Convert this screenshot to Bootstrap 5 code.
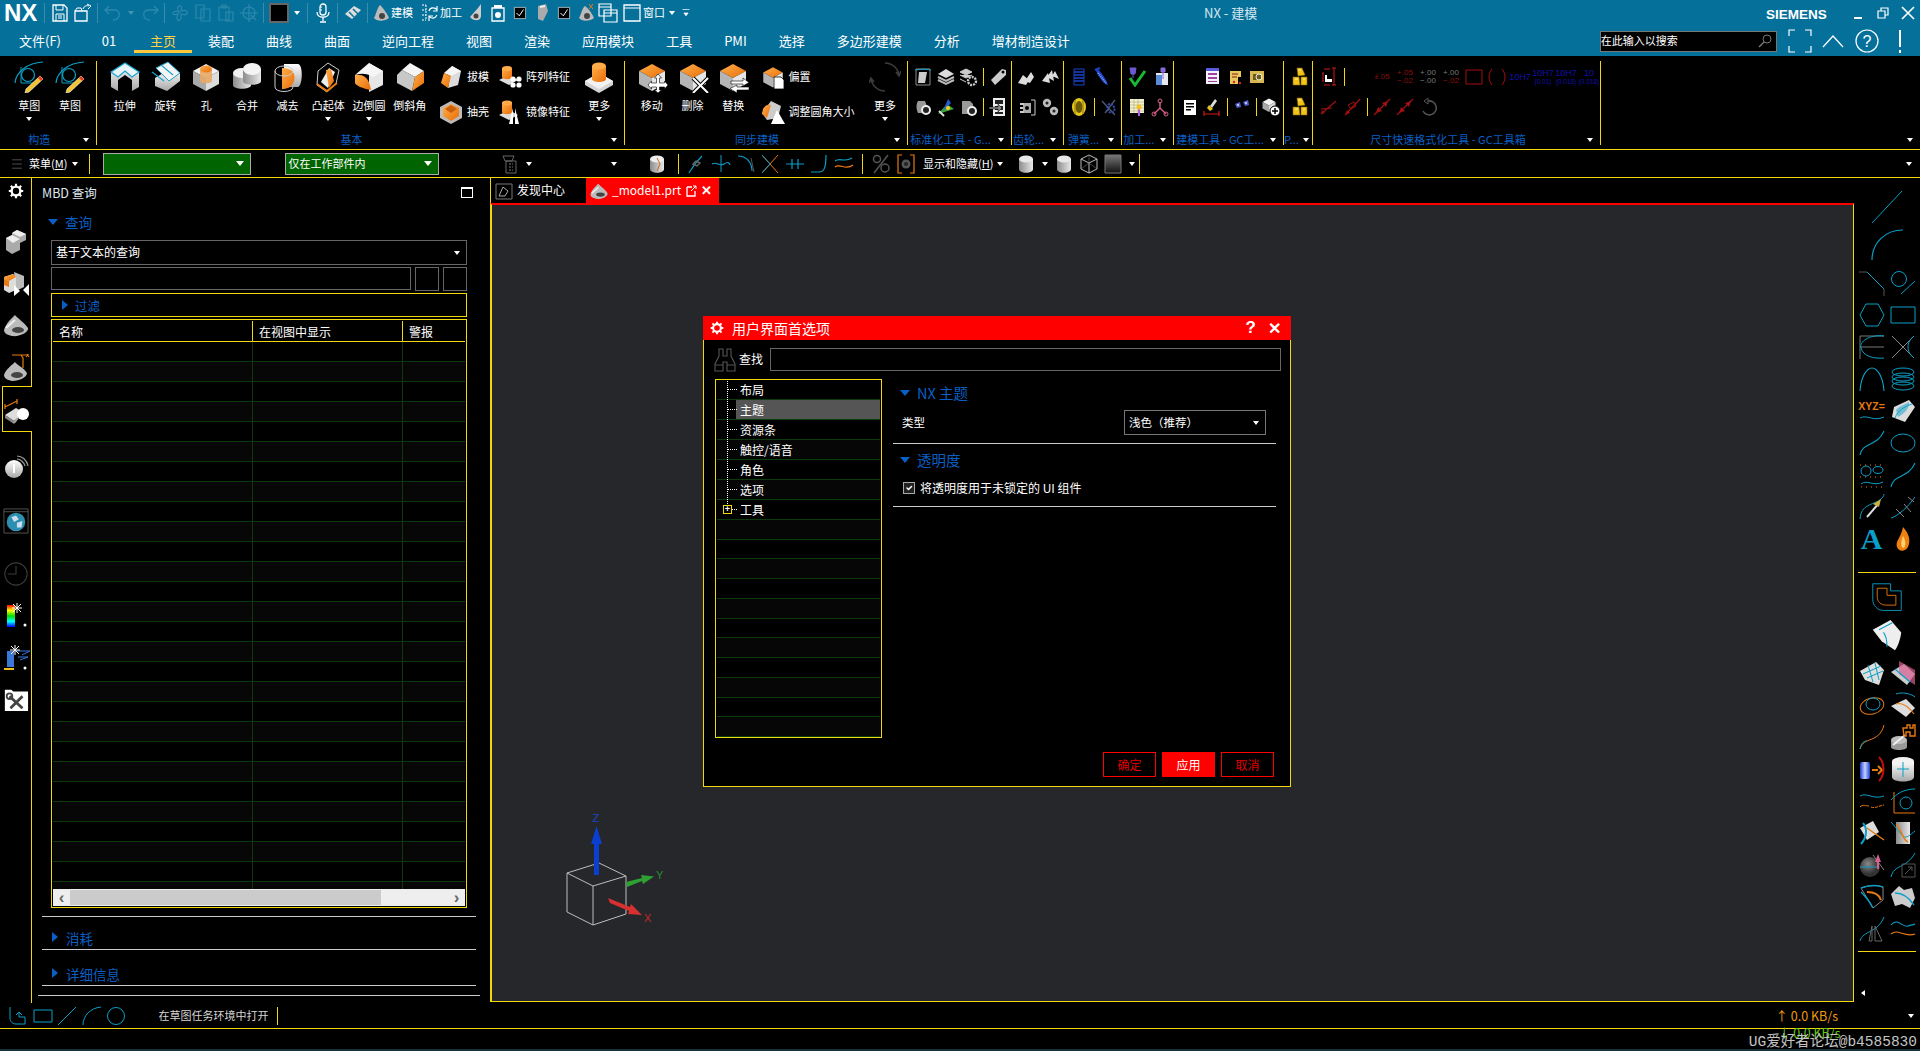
<!DOCTYPE html>
<html lang="zh-CN">
<head>
<meta charset="UTF-8">
<title>NX - 建模</title>
<link rel="stylesheet" href="https://cdn.jsdelivr.net/npm/bootstrap@5.3.3/dist/css/bootstrap.min.css">
<style>
  :root { --nx-y: #f2d80c; --nx-blue: #0a5fc4; --nx-head: #05719b; --nx-line: #0b3a0b; }
  body { background: #000; color: #fff; font-family: "Noto Sans CJK SC", "Liberation Sans", sans-serif; font-size: 12px; height: 1051px; width: 1920px; overflow: hidden; line-height: 1.2; }
  svg { display: block; flex: none; }
  .i14 { width: 14px; height: 14px; } .i16 { width: 16px; height: 16px; } .i20 { width: 20px; height: 20px; } .i24 { width: 24px; height: 24px; }
  .i26 { width: 26px; height: 26px; } .i28 { width: 28px; height: 28px; } .i32 { width: 32px; height: 32px; } .i36 { width: 36px; height: 36px; }
  .tri { display: inline-block; width: 0; height: 0; border-left: 3.5px solid transparent; border-right: 3.5px solid transparent; border-top: 4px solid #fff; flex: none; }
  .tri-bd { display: inline-block; border-left: 5.5px solid transparent; border-right: 5.5px solid transparent; border-top: 6px solid var(--nx-blue); flex: none; }
  .tri-br { display: inline-block; border-top: 5.5px solid transparent; border-bottom: 5.5px solid transparent; border-left: 6px solid var(--nx-blue); flex: none; }

  /* head */
  .nx-head { background: var(--nx-head); height: 56px; flex: none; }
  .qa-row { height: 26px; }
  .nx-logo { width: 41px; padding-left: 4px; font: 700 24px "Liberation Sans", sans-serif; }
  .qa { width: 23px; display: flex; justify-content: center; flex: none; }
  .qa-n { width: 22px; } .qa-c { width: 20px; } .qa-a { width: 14px; display: flex; justify-content: center; flex: none; } .qa-w { width: 21px; }
  .qa-sep { width: 1px; height: 20px; margin: 0 3px; background: #3b8bab; flex: none; }
  .qa-t { font-size: 11px; white-space: nowrap; }
  .qa-gap3 { margin-right: 3px; } .qa-gap6 { margin-right: 6px; } .qa-gap2 { margin-left: 2px; }
  .nx-title { margin-left: 511px; font-size: 13px; color: #d5e6ee; white-space: nowrap; }
  .nx-siemens { margin-left: auto; margin-top: 2px; font: 700 13.5px "Liberation Sans", sans-serif; width: 88px; padding-left: 9px; }
  .win-btn { width: 25px; display: flex; justify-content: center; }
  .tab-row { height: 30px; }
  .tab-row .nav-link { color: #fff; font-size: 13px; padding: 0 16px; height: 30px; line-height: 29px; white-space: nowrap; border-bottom: 2px solid transparent; }
  .tab-row .nav-link.active { color: #ffd24a; border-bottom: 3px solid #ffc83a; height: 27px; line-height: 29px; }
  .tab-row .tb-file { width: 80px; padding: 0; text-align: center; }
  .tab-row .tb-01 { width: 54px; padding: 0 0 0 4px; text-align: center; }
  .nx-search { width: 177px; height: 21px; margin-left: 514px; background: #000; border: 1px solid #777; font-size: 11px; }
  .head-ic { width: 33.5px; display: flex; justify-content: center; }
  .head-ic:first-of-type { margin-left: 6px; }

  /* ribbon */
  .nx-ribbon { height: 93px; flex: none; background: #000; }
  .rg { height: 84px; margin-top: 5px; border-right: 1px solid var(--nx-y); display: flex; flex-direction: column; flex: none; }
  .rg-body { display: flex; flex: 1 1 auto; min-height: 0; }
  .rg-foot { display: flex; align-items: center; height: 14px; margin-bottom: -2px; color: var(--nx-blue); font-size: 11px; white-space: nowrap; padding-right: 7px; }
  .rg-foot > span:first-child { flex: 1 1 auto; text-align: center; padding-right: 4px; }
  .w-gz { width: 96.5px; } .w-jb { width: 528px; } .w-tb { width: 283px; } .w-bz { width: 104px; } .w-cl { width: 52px; }
  .w-th { width: 58px; } .w-jg { width: 52.5px; } .w-jm { width: 110px; } .w-p { width: 29px; } .w-cc { width: 288px; } .w-end { flex: 1 1 auto; border-right: 0; }
  .pad-gz { padding-left: 9px; } .pad-jb { padding-left: 8px; }  .pad-tb { padding-left: 7px; }
  .rb { width: 40.7px; display: flex; flex-direction: column; align-items: center; flex: none; }
  .rb .lbl { margin-top: 5px; font-size: 11px; line-height: 14px; white-space: nowrap; }
  .rb .tri { margin-top: 5px; }
  .rc { display: flex; flex-direction: column; margin-top: -1.5px; flex: none; }
  .rs { display: flex; align-items: center; height: 35px; font-size: 11px; white-space: nowrap; }
  .rs svg { margin-right: 4px; }
  .rc-a { width: 59px; margin-left: 9px; } .rc-b { width: 81px; }  .rc-c { width: 104px; margin-left: 7px; }
  .mg { display: flex; flex-direction: column; padding: 1px 0 0 4.5px; }
  .mr { display: flex; align-items: center; height: 30px; }
  .mi { width: 22.5px; display: flex; justify-content: center; align-items: center; flex: none; }
  .mw .mi { width: 23px; }
  .msep { width: 1px; height: 18px; background: var(--nx-y); margin: 0 3px; flex: none; }
  .mi.tol { display: block; font: 8px/8px "Liberation Sans", sans-serif; color: #8a1010; text-align: center; white-space: nowrap; }
  .mi.tol-g { color: #777; } .mi.tol-b { color: #1010a8; font-size: 9px; line-height: 9px; }
  .tol-g2 { color: #777; } .tol-s { display: block; font-size: 6.5px; line-height: 7px; }

  /* toolbar */
  .nx-tools { height: 29px; flex: none; border-top: 1px solid var(--nx-y); border-bottom: 1px solid var(--nx-y); display: flex; align-items: center; font-size: 11px; white-space: nowrap; }
  .tl-menu { width: 88.5px; padding-left: 10px; gap: 5px; }
  .tl-sep { width: 1px; height: 20px; background: var(--nx-y); flex: none; }
  .tl-sel { height: 22px; background: #006400; border: 1px solid #aaa; display: flex; align-items: center; padding: 0 6px 0 3px; color: #fff; flex: none; }
  .tl-sel .tri { margin-left: auto; border-left-width: 4px; border-right-width: 4px; border-top-width: 5px; }
  .tl-s1 { width: 148px; margin-left: 13px; } .tl-s2 { width: 154px; margin-left: 34px; }
  .tl-i { width: 24.5px; display: flex; justify-content: center; flex: none; }
  .tl-a { width: 14px; display: flex; justify-content: center; flex: none; }
  .tl-gap1 { margin-left: 59px; } .tl-gap2 { margin-left: 71px; } .tl-gap3 { margin-left: 24px; } .tl-gap4 { margin-left: 6px; } .tl-gap5 { margin-left: 6px; } .tl-gap6 { margin-left: 8px; }
  .tl-show { margin-left: 5px; }

  /* main */
  .nx-main { height: 825px; flex: none; display: flex; }
  .nx-strip { width: 32px; border-right: 1px solid var(--nx-y); flex: none; display: flex; flex-direction: column; align-items: center; }
  .st { height: 28px; display: flex; justify-content: center; align-items: center; width: 100%; flex: none; }
  .st-first { margin-top: -1px; } .st-g12 { margin-top: 12px; } .st-g14 { margin-top: 14px; } .st-g15 { margin-top: 15px; }
  .st-g21 { margin-top: 21px; } .st-g25 { margin-top: 25px; } .st-g26 { margin-top: 26px; }
  .st-on { width: 30px; height: 46px; margin: 4px -1px 0 2px; align-self: flex-start; position: relative; background: #000; border: 1px solid var(--nx-y); border-right: 0; padding: 4px 2px 0 0; }

  .nx-panel { width: 458px; flex: none; display: flex; flex-direction: column; }
  .pn-title { height: 29px; padding: 0 17px 0 10px; font-size: 12.5px; color: #dfe8f0; }
  .pn-max { width: 12px; height: 11px; border: 1px solid #fff; border-top-width: 2px; margin-left: auto; }
  .pn-sec { height: 30px; padding-left: 16px; gap: 7px; color: var(--nx-blue); font-size: 13.5px; }
  .pn-in { margin: 0 0 0 19px; width: 416px; }
  .pn-sel { height: 25px; margin-top: 3px; border: 1px solid #666; padding: 0 6px 0 4px; }
  .pn-row2 { margin-top: 2px; gap: 4px; }
  .pn-inp { height: 23px; border: 1px solid #666; flex: 1 1 auto; }
  .pn-sq { width: 24px; height: 24px; border: 1px solid #666; flex: none; }
  .pn-filter { height: 24px; margin-top: 2px; border: 1px solid var(--nx-y); padding-left: 10px; gap: 7px; color: var(--nx-blue); font-size: 12.5px; }
  .pn-tbl { height: 589px; margin-top: 2px; border: 1px solid var(--nx-y); padding: 1px; display: flex; flex-direction: column; }
  .pn-scroll { height: 568px; overflow: hidden; flex: none; }
  .mbd-tbl { table-layout: fixed; width: 412px; margin: 0; border-collapse: separate; border-spacing: 0; }
  .mc-a { width: 200px; } .mc-b { width: 150px; } .mc-c { width: 62px; }
  .mbd-tbl.table > :not(caption) > * > * { background: transparent; color: #fff; padding: 0 0 0 6px; height: 20px; border: 0; border-right: 1px solid var(--nx-line); border-bottom: 1px solid var(--nx-line); box-shadow: none; }
  .mbd-tbl.table > thead > tr > th { font-weight: 400; font-size: 12px; height: 21px; line-height: 17px; vertical-align: middle; border-right: 1px solid var(--nx-y); border-bottom: 1px solid var(--nx-y); }
  .mbd-tbl.table > thead > tr > th:last-child, .mbd-tbl.table > tbody > tr > td:last-child { border-right: 0; }
  .mbd-tbl.table > tbody > tr:nth-child(even) > td { background: #070707; }
  .pn-bar { height: 17px; background: #eee; display: flex; align-items: center; flex: none; }
  .pn-arr { width: 17px; color: #666; font: 700 17px/15px "Liberation Sans", sans-serif; text-align: center; flex: none; }
  .pn-thumb { width: 311px; height: 15px; background: #cbcbcb; }
  .pn-arr-r { margin-left: auto; }
  .pn-div { margin: 8px 0 0 10px; width: 434px; border-top: 1px solid #ccc; }
  .pn-col { margin-left: 10px; width: 434px; border-bottom: 1px solid #ccc; padding: 0 0 3px 10px; gap: 8px; color: var(--nx-blue); font-size: 13.5px; align-items: flex-end; }
  .pn-col-a { height: 33px; } .pn-col-b { height: 36px; }
  .pn-col .tri-br { margin-bottom: 4px; }
  .pn-end { margin: 9px 0 0 6px; width: 442px; border-top: 1px solid #ccc; }

  .nx-center { width: 1364px; flex: none; display: flex; flex-direction: column; }
  .vt-tabs { height: 25px; flex: none; border-left: 1px solid var(--nx-y); font-size: 12px; }
  .vt-a { width: 95px; padding-left: 3px; gap: 3px; } .vt-b { width: 133px; background: #f00; padding-left: 3px; gap: 3px; flex: none; }
  .vt-x { font: 700 13px "Liberation Sans", sans-serif; }
  .nx-view { height: 799px; position: relative; background: #26272b; border-top: 2px solid #f00; border-left: 2px solid var(--nx-y); border-right: 1px solid var(--nx-y); border-bottom: 1px solid var(--nx-y); flex: none; }
  .nx-triad { position: absolute; left: 48px; top: 585px; width: 200px; height: 150px; }

  /* dialog */
  .ui-dlg { position: absolute; left: 211px; top: 111px; width: 588px; height: 471px; background: #000; border: 1px solid var(--nx-y); border-radius: 0; color: #fff; }
  .ui-dlg .card-header { height: 24px; background: #f00; border: 0; border-radius: 0; padding: 0 10px 0 7px; margin: -1px -1px 0; display: flex; align-items: center; font-size: 14px; }
  .dlg-t { margin-left: 8px; } .dlg-q { margin-left: auto; font: 700 17px "Liberation Sans", sans-serif; } .dlg-c { margin-left: 12px; font: 700 16px "Liberation Sans", sans-serif; }
  .dlg-find { margin: 8px 9px 0 9px; height: 23px; gap: 2px; font-size: 12px; }
  .dlg-find-i { flex: 1 1 auto; height: 23px; margin-left: 5px; border: 1px solid #666; }
  .dlg-body { margin: 8px 0 0 11px; }
  .ui-tree { width: 167px; height: 359px; border: 1px solid var(--nx-y); border-radius: 0; padding: 0 1px; overflow: hidden; flex: none; }
  .ui-tree .list-group-item { background: transparent; color: #fff; border: 0; border-radius: 0; border-bottom: 1px solid var(--nx-line); height: 20px; padding: 0 0 0 23px; font-size: 12px; line-height: 19px; position: relative; margin: 0; }
  .ui-tree .list-group-item:nth-child(even) { background: #060606; }
  .ui-tree .nd::before { content: ""; position: absolute; left: 10px; top: -1px; height: 21px; border-left: 1px dotted #fff; }
  .ui-tree .nd::after { content: ""; position: absolute; left: 11px; top: 9px; width: 9px; border-top: 1px dotted #fff; }
  .ui-tree .nd-last::before { height: 11px; }
  .ui-tree .list-group-item.nd-sel { background: linear-gradient(#555, #555) no-repeat 19px 0 / calc(100% - 19px) 100%; }
  .nd-plus { position: absolute; left: 6px; top: 5px; width: 9px; height: 9px; border: 1px solid var(--nx-y); background: #000; z-index: 1; color: #fff; font: 700 9px/7px "Liberation Sans", sans-serif; text-align: center; }
  .dlg-pane { width: 383px; margin-left: 11px; flex: none; }
  .dlg-sec { padding-left: 7px; gap: 7px; color: var(--nx-blue); font-size: 14.5px; }
  .dlg-sec-a { height: 28px; } .dlg-sec-b { height: 32px; }
  .dlg-type { margin-top: 3px; height: 25px; padding-left: 9px; font-size: 11.5px; }
  .dlg-sel { width: 142px; height: 25px; margin-left: auto; margin-right: 10px; border: 1px solid #777; padding: 0 6px 0 4px; font-size: 11.5px; }
  .dlg-hr { height: 1px; background: #ccc; margin-top: 8px; }
  .dlg-chk { height: 20px; margin-top: 2px; padding-left: 10px; gap: 5px; font-size: 12px; }
  .dlg-chk .form-check-input { width: 12px; height: 12px; margin: 0; background-color: #222; border: 1px solid #aaa; border-radius: 0; float: none; flex: none; }
  .dlg-foot { margin-top: auto; gap: 6px; padding: 0 16px 9px 0; }
  .dlg-foot .btn { width: 53px; height: 25px; padding: 0; border-radius: 0; font-size: 12px; border: 1px solid #f00; color: #e00000; background: #000; }
  .dlg-foot .btn.btn-danger { background: #f00; color: #fff; }

  /* right bar */
  .nx-right { width: 66px; flex: none; padding: 10px 0 0 2px; display: flex; flex-direction: column; }
  .rt-big { height: 38px; width: 62px; display: flex; justify-content: center; align-items: center; flex: none; }
  .rt-r { height: 32px; display: flex; align-items: center; flex: none; }
  .rt-c { width: 31px; display: flex; justify-content: center; align-items: center; }
  .rt-a { font: 700 30px/30px "Liberation Serif", serif; color: #0a9fc8; }
  .rt-sep { height: 1px; width: 58px; margin-left: 2px; background: var(--nx-y); flex: none; }
  .rt-mt3 { margin-top: 3px; } .rt-s1 { margin-top: 17px; } .rt-s2 { margin-top: 6px; } .rt-mb { margin-bottom: 2px; }
  .rt-left { margin: 38px 0 0 5px; width: 0; height: 0; border-top: 3.5px solid transparent; border-bottom: 3.5px solid transparent; border-right: 4px solid #fff; }
  .rt-tb { flex-direction: column; gap: 2px; }
  .rt-xyz { font: 700 10.5px/11px "Liberation Sans", sans-serif; color: #e87a10; white-space: nowrap; }
  .rt-wave { width: 26px; height: 8px; }

  /* status */
  .nx-status { height: 26px; flex: none; border-bottom: 1px solid var(--nx-y); display: flex; align-items: center; font-size: 11px; color: #d5d5d5; }
  .ss-ic { width: 24.5px; display: flex; justify-content: center; flex: none; }
  .ss-first { margin-left: 6px; }
  .ss-t { margin-left: 30px; white-space: nowrap; }
  .ss-sep { width: 1px; height: 18px; background: var(--nx-y); margin-left: 8px; }
  .ss-up { margin-left: auto; color: #f09a10; font-size: 12.5px; white-space: nowrap; }
  .ss-end { margin: 0 6px 0 70px; }
  .nx-foot { height: 22px; flex: none; border-bottom: 2px solid #17323c; position: relative; }
  .ss-down { position: absolute; left: 1778px; top: -4px; color: #62c814; font-size: 12.5px; white-space: nowrap; }
  .ss-mark { position: absolute; right: 3px; top: 0; font: 14.5px "Liberation Mono", "Noto Sans CJK SC", monospace; color: #c4c4c4; white-space: nowrap; }
</style>
</head>
<body class="d-flex flex-column">

<svg width="0" height="0" class="position-absolute">
  <defs>
    <linearGradient id="gw" x1="0" y1="0" x2="0" y2="1"><stop offset="0" stop-color="#fff"/><stop offset="1" stop-color="#a8a8a8"/></linearGradient>
    <linearGradient id="gg" x1="0" y1="0" x2="1" y2="0"><stop offset="0" stop-color="#8c8c8c"/><stop offset="1" stop-color="#e8e8e8"/></linearGradient>
    <linearGradient id="go" x1="0" y1="0" x2="1" y2="1"><stop offset="0" stop-color="#ffb04a"/><stop offset="1" stop-color="#e86c08"/></linearGradient>
    <linearGradient id="gr" x1="0" y1="0" x2="0" y2="1"><stop offset="0" stop-color="#f00"/><stop offset=".25" stop-color="#ff0"/><stop offset=".5" stop-color="#0d0"/><stop offset=".75" stop-color="#0ff"/><stop offset="1" stop-color="#00f"/></linearGradient>
    <linearGradient id="gb" x1="0" y1="0" x2="1" y2="0"><stop offset="0" stop-color="#1b3fd0"/><stop offset=".5" stop-color="#c7d2ff"/><stop offset="1" stop-color="#1b3fd0"/></linearGradient>
    <linearGradient id="gk" x1="0" y1="0" x2="0" y2="1"><stop offset="0" stop-color="#777"/><stop offset="1" stop-color="#111"/></linearGradient>
    <radialGradient id="gs" cx=".4" cy=".35"><stop offset="0" stop-color="#8a8a8a"/><stop offset="1" stop-color="#333"/></radialGradient>

    <!-- base cubes -->
    <symbol id="cw" viewBox="0 0 32 32"><path d="M16 3 29 10 16 17 3 10z" fill="#f2f2f2"/><path d="M3 10 16 17V30L3 23z" fill="#a9a9a9"/><path d="M29 10 16 17V30L29 23z" fill="#dcdcdc"/></symbol>
    <symbol id="co" viewBox="0 0 32 32"><path d="M16 3 29 10 16 17 3 10z" fill="url(#go)"/><path d="M3 10 16 17V30L3 23z" fill="#b5b5b5"/><path d="M29 10 16 17V30L29 23z" fill="#e6e6e6"/></symbol>

    <!-- ribbon large -->
    <symbol id="r-sk" viewBox="0 0 32 32"><path d="M2 22C3 11 14 2 30 1" fill="none" stroke="#0a9fc8" stroke-width="1.2"/><path d="M8 6V22H22" fill="none" stroke="#0a9fc8" stroke-width="1"/><circle cx="15" cy="14" r="6.5" fill="none" stroke="#0a9fc8" stroke-width="1.2"/><path d="M27 15 30 18 16 31 12 32 13 28z" fill="#f4c430" stroke="#fff" stroke-width=".6"/><path d="M27 15 30 18 28 20 25 17z" fill="#e23a2a"/></symbol>
    <symbol id="r-ext" viewBox="0 0 32 32"><path d="M2 11 16 2 30 11V26L23 30V19L16 14 9 19V30L2 26z" fill="url(#gw)"/><path d="M2 11 16 2 30 11 23 16 16 10 9 16z" fill="#e8f4f8" stroke="#18a4cc" stroke-width="1.2"/></symbol>
    <symbol id="r-rev" viewBox="0 0 32 32"><path d="M5 17 20 8 30 13 30 20 17 30 5 25z" fill="url(#gw)"/><path d="M6 7 18 1 30 12 19 20z" fill="#f4f4f4" stroke="#18a4cc"/><path d="M2 11 14 20M11 4 23 14" stroke="#18a4cc" stroke-width="1.2"/></symbol>
    <symbol id="r-hole" viewBox="0 0 32 32"><use href="#cw"/><path d="M10 8V20C10 23 22 23 22 20V8z" fill="#e8a868" opacity=".9"/><ellipse cx="16" cy="8" rx="6" ry="3.5" fill="url(#go)"/></symbol>
    <symbol id="r-uni" viewBox="0 0 32 32"><path d="M2 12V24C2 29 20 29 20 24V12z" fill="url(#gg)"/><ellipse cx="11" cy="12" rx="9" ry="5" fill="#f0f0f0"/><path d="M12 8V20C12 25 30 25 30 20V8z" fill="url(#gg)"/><ellipse cx="21" cy="8" rx="9" ry="6" fill="#f4f4f4"/></symbol>
    <symbol id="r-sub" viewBox="0 0 32 32"><path d="M12 3H26C31 3 31 24 26 26H12z" fill="url(#gw)"/><path d="M10 7C20 7 24 12 22 20 20 27 14 28 10 28z" fill="url(#go)"/><ellipse cx="12" cy="10" rx="9" ry="5" fill="none" stroke="#ccc"/><path d="M3 10V26C3 32 21 32 21 26" fill="none" stroke="#ccc"/></symbol>
    <symbol id="r-boss" viewBox="0 0 32 32"><path d="M6 10 16 2 27 9 24 23 15 31 5 24z" fill="none" stroke="#ccc"/><path d="M9 21 17 7 23 11 16 27z" fill="#eee"/><path d="M14 9 19 8 22 20 17 27z" fill="url(#go)"/><path d="M5 23 15 30 25 22" fill="none" stroke="#e87a10" stroke-width="2"/></symbol>
    <symbol id="r-bld" viewBox="0 0 32 32"><path d="M16 2 30 10V24L16 31z" fill="#e6e6e6"/><path d="M16 2 30 10 20 16C14 12 8 12 2 14z" fill="#f6f6f6"/><path d="M2 14C10 13 16 16 18 29 10 28 2 24 2 22z" fill="url(#go)"/></symbol>
    <symbol id="r-chm" viewBox="0 0 32 32"><path d="M16 2 30 10 21 16 8 9z" fill="#f4f4f4"/><path d="M8 9 21 16 18 30 3 22V14z" fill="#c8c8c8"/><path d="M21 16 30 10V22L18 30z" fill="url(#go)"/></symbol>
    <symbol id="r-more" viewBox="0 0 32 32"><path d="M2 20 16 12 30 20V24L16 32 2 24z" fill="#d5d5d5"/><path d="M2 20 16 12 30 20 16 28z" fill="#f2f2f2"/><path d="M9 5V18C9 22 23 22 23 18V5z" fill="url(#go)"/><ellipse cx="16" cy="5" rx="7" ry="3.5" fill="#ffab4a"/></symbol>
    <symbol id="r-move" viewBox="0 0 32 32"><use href="#co"/><path d="M22 13 25.500 17H23.500V22H28.500V20L32 24 28.500 28V26H23.500V29H25.500L22 32 18.500 29H20.500V26H15.500V28L12 24 15.500 20V22H20.500V17H18.500z" fill="#fff" stroke="#000" stroke-width=".6"/></symbol>
    <symbol id="r-del" viewBox="0 0 32 32"><use href="#co"/><path d="M16 17 31 32M31 17 16 32" stroke="#000" stroke-width="4"/><path d="M16 17 31 32M31 17 16 32" stroke="#fff" stroke-width="2"/></symbol>
    <symbol id="r-rep" viewBox="0 0 32 32"><use href="#co"/><path d="M14 20H26V17L32 21.500 26 25V23H14z" fill="#fff" stroke="#000" stroke-width=".6"/><path d="M32 26H20V24L13 27.500 20 32V29H32z" fill="#fff" stroke="#000" stroke-width=".6"/></symbol>
    <symbol id="r-ref" viewBox="0 0 32 32"><path d="M16 2A14 14 0 0 1 30 15M27 11 30 15 32 10M16 30A14 14 0 0 1 2 17M5 21 2 17 0 22" fill="none" stroke="#3c3c3c" stroke-width="1.6"/></symbol>

    <!-- ribbon small -->
    <symbol id="s-dft" viewBox="0 0 24 24"><path d="M13 1 22 6 19 20 9 23z" fill="#dcdcdc"/><path d="M5 8 13 1 22 6 12 11z" fill="#f5f5f5"/><path d="M5 8 12 11 9 23 2 18z" fill="url(#go)"/></symbol>
    <symbol id="s-shl" viewBox="0 0 24 24"><path d="M12 1 23 7V18L12 24 1 18V7z" fill="#bbb"/><path d="M12 4 20 8V16L12 21 4 16V8z" fill="url(#go)"/><path d="M6 9 12 5 18 9 12 13z" fill="#c9600c"/></symbol>
    <symbol id="s-pat" viewBox="0 0 24 24"><path d="M1 15 11 10 20 15 11 20z" fill="#ddd"/><path d="M4 3V12C4 15 14 15 14 12V3z" fill="url(#go)"/><ellipse cx="9" cy="3.500" rx="5" ry="2.500" fill="#ffab4a"/><g fill="#fff"><circle cx="15" cy="14" r="2.600"/><circle cx="21" cy="14" r="2.600"/><circle cx="15" cy="20" r="2.600"/><circle cx="21" cy="20" r="2.600"/></g></symbol>
    <symbol id="s-mir" viewBox="0 0 24 24"><path d="M1 15 11 10 20 15 11 20z" fill="#ddd"/><path d="M4 2V12C4 15 14 15 14 12V2z" fill="url(#go)"/><ellipse cx="9" cy="3" rx="5" ry="2.500" fill="#ffab4a"/><path d="M15 8 11 24H15zM17 8 21 24H17z" fill="#fff"/></symbol>
    <symbol id="s-off" viewBox="0 0 24 24"><use href="#co"/><path d="M13 12H20L23 15V24H13z" fill="#fff" stroke="#000" stroke-width=".8"/></symbol>
    <symbol id="s-rsz" viewBox="0 0 24 24"><path d="M10 1 20 6 17 18 6 20 1 13z" fill="#ccc"/><path d="M2 9C4 5 7 4 10 5L6 18 1 14z" fill="url(#go)"/><path d="M16 10 24 24H10z" fill="#fff"/></symbol>

    <!-- mini -->
    <symbol id="m-a" viewBox="0 0 20 20"><path d="M3 2H17V18H3z" fill="none" stroke="#8a8a8a"/><path d="M6 5H14L12 16H5z" fill="#ccc"/><path d="M2 3 10 2 18 3" fill="none" stroke="#18a4cc"/></symbol>
    <symbol id="m-b" viewBox="0 0 20 20"><path d="M10 2 18 7 10 11 2 7z" fill="#ddd"/><path d="M2 10 10 14 18 10M2 13 10 17 18 13" fill="none" stroke="#bbb" stroke-width="2"/></symbol>
    <symbol id="m-c" viewBox="0 0 20 20"><path d="M8 2 14 5 8 8 2 5zM2 8 8 11 14 8M2 12 8 15" fill="#ccc" stroke="#ccc"/><circle cx="14" cy="14" r="4" fill="none" stroke="#ccc" stroke-width="2.400" stroke-dasharray="2 1"/></symbol>
    <symbol id="m-d" viewBox="0 0 20 20"><path d="M3 13 14 2 18 3 18 8 7 18z" fill="#ccc"/><circle cx="15" cy="5" r="1.500" fill="#000"/></symbol>
    <symbol id="m-e" viewBox="0 0 20 20"><path d="M5 4C3 7 3 12 5 16H13L15 12 12 4z" fill="#999"/><circle cx="13" cy="13" r="5" fill="#eee"/><circle cx="13" cy="13" r="3" fill="#222"/></symbol>
    <symbol id="m-f" viewBox="0 0 20 20"><path d="M2 17 11 7 18 12z" fill="#3aa83a"/><path d="M7 14 12 2 15 6z" fill="#2a5ad0"/><path d="M3 14 8 19" stroke="#ddd" stroke-width="2"/><circle cx="12" cy="11" r="2" fill="#f5d020"/></symbol>
    <symbol id="m-g" viewBox="0 0 20 20"><path d="M4 4H12L15 7V17H4z" fill="#999"/><circle cx="14" cy="14" r="5" fill="#eee"/><circle cx="14" cy="14" r="3" fill="#222"/></symbol>
    <symbol id="m-h" viewBox="0 0 20 20"><path d="M5 1H17V19H5z" fill="#eee"/><path d="M7 3H15V7H7zM7 9H15V13H7zM7 15H15V17H7z" fill="#222"/><path d="M1 10H10V7L14 11 10 15V12H1z" fill="#888" stroke="#000" stroke-width=".5"/></symbol>
    <symbol id="m-i" viewBox="0 0 20 20"><path d="M1 16 6 8 12 13 9 18zM8 14 14 5 17 10 13 16z" fill="#ddd"/></symbol>
    <symbol id="m-j" viewBox="0 0 20 20"><path d="M2 14 8 6 10 16zM7 10 12 3 14 14zM12 9 15 4 19 12z" fill="#ddd"/></symbol>
    <symbol id="m-k" viewBox="0 0 20 20"><path d="M6 6H14V16H6z" fill="#aaa"/><circle cx="10" cy="11" r="2" fill="#000"/><path d="M14 3H18V18H14" fill="none" stroke="#ccc"/><path d="M3 7H7M3 11H6M3 15H7" stroke="#ccc" stroke-width="2"/></symbol>
    <symbol id="m-l" viewBox="0 0 20 20"><g fill="#bbb"><circle cx="7" cy="6" r="4.200"/><circle cx="14" cy="14" r="4.200"/></g><g fill="#222"><circle cx="7" cy="6" r="1.500"/><circle cx="14" cy="14" r="1.500"/></g></symbol>
    <symbol id="m-n" viewBox="0 0 20 20"><path d="M5 2H15V18H5z" fill="none" stroke="#1a44c8"/><path d="M5 5H15M5 8H15M5 11H15M5 14H15" stroke="#1a44c8" stroke-width="1.400"/></symbol>
    <symbol id="m-o" viewBox="0 0 20 20"><path d="M5 2C9 4 15 14 16 18 12 18 7 10 4 4z" fill="#1a44c8"/><path d="M3 3 8 1" stroke="#1a44c8" stroke-width="2"/><path d="M6 6 14 16" stroke="#7a9af0" stroke-dasharray="1 1" stroke-width="2"/></symbol>
    <symbol id="m-p" viewBox="0 0 20 20"><ellipse cx="10" cy="10" rx="7" ry="9" fill="#e8c818"/><ellipse cx="10" cy="10" rx="3.500" ry="6" fill="#6a5a08"/><path d="M6 3V17M14 3V17" stroke="#8a7410"/></symbol>
    <symbol id="m-q" viewBox="0 0 20 20"><path d="M3 4 16 18M16 3 6 16" stroke="#556" stroke-width="1.400"/><path d="M9 8C12 5 17 10 15 14 12 18 7 14 9 8z" fill="none" stroke="#3050b0" stroke-width="2" stroke-dasharray="2 1"/></symbol>
    <symbol id="m-r" viewBox="0 0 20 20"><path d="M3 1H9L8 7H4zM6 7V11" fill="#6a5ad0" stroke="#6a5ad0"/><path d="M3 11 8 18 18 4" fill="none" stroke="#1ab832" stroke-width="3"/></symbol>
    <symbol id="m-s" viewBox="0 0 20 20"><path d="M6 6H18V18H6z" fill="#e8e8f0"/><path d="M6 8H12V18H6z" fill="#5a8ad8"/><path d="M11 1H15V5H11zM13 5V12" fill="#8a6ad8" stroke="#8a6ad8"/></symbol>
    <symbol id="m-t" viewBox="0 0 20 20"><path d="M3 2H17V16H3z" fill="#f5f0d0"/><path d="M3 5H17M3 8H17M3 11H17M3 14H17M7 2V16M11 2V16" stroke="#9a9a60" stroke-width=".5"/><path d="M12 9V19" stroke="#b060e0" stroke-width="2"/><circle cx="12" cy="10" r="2.500" fill="#f4c020"/></symbol>
    <symbol id="m-u" viewBox="0 0 20 20"><path d="M10 5V11L4 17M10 11 16 17" fill="none" stroke="#d8608a" stroke-width="1.400"/><circle cx="10" cy="4" r="2" fill="none" stroke="#d8608a"/><circle cx="4" cy="17" r="2" fill="none" stroke="#d8608a"/><circle cx="16" cy="17" r="2" fill="none" stroke="#d8608a"/></symbol>
    <symbol id="m-v" viewBox="0 0 20 20"><path d="M4 1H17V17H4z" fill="#f2f2ff"/><path d="M4 1H17V4H4z" fill="#5a5ad8"/><path d="M6 6H15V8H6zM6 10H15V12H6zM6 14H15V15H6z" fill="#a040a0"/></symbol>
    <symbol id="m-w" viewBox="0 0 20 20"><path d="M5 4H16V10L13 10 13 17H5z" fill="#e8c858"/><path d="M7 7H13M7 10H12" stroke="#8a1a1a"/><circle cx="15" cy="16" r="1.200" fill="#e02020"/><circle cx="9" cy="15" r="1.200" fill="#e02020"/></symbol>
    <symbol id="m-x" viewBox="0 0 20 20"><path d="M3 4H17V16H3z" fill="#d8b850"/><path d="M6 7H14V13H6z" fill="#6a5a18"/><circle cx="12" cy="10" r="3" fill="none" stroke="#eee"/></symbol>
    <symbol id="m-y" viewBox="0 0 20 20"><path d="M4 3H16V18H4z" fill="#fff"/><path d="M6 6H14V7.500H6zM6 9H14V10.500H6zM6 12H11V13.500H6z" fill="#000"/></symbol>
    <symbol id="m-z" viewBox="0 0 20 20"><path d="M13 2 15 4 10 11 8 9z" fill="#ddd"/><path d="M7 8 11 12 8 14 5 11z" fill="#e8c020"/><path d="M2 17H17M2 14V19M17 14V19" stroke="#d01818" stroke-width="1.200"/></symbol>
    <symbol id="m-aa" viewBox="0 0 20 20"><path d="M3 7 8 5 9 10 5 11zM11 5 16 3 17 8 13 9z" fill="#5060d0"/><circle cx="6" cy="8" r="1" fill="#ddd"/><circle cx="14" cy="6" r="1" fill="#ddd"/></symbol>
    <symbol id="m-ab" viewBox="0 0 20 20"><use href="#cw" width="16" height="16"/><circle cx="14" cy="14" r="5" fill="#fff" stroke="#000"/><path d="M14 11V17M11 14H17" stroke="#000" stroke-width="1.500"/></symbol>
    <symbol id="m-ac" viewBox="0 0 20 20"><path d="M7 1H12L15 8 8 9zM3 10H9L10 18H3zM11 10H17V18H11z" fill="#f2c418" stroke="#8a6a08" stroke-width=".6"/><path d="M8 3H11M5 12H8M13 12H15" stroke="#fff2a0"/></symbol>
    <symbol id="m-ad" viewBox="0 0 20 20"><path d="M3 6H5M4 6V14M3 14H5M15 1V18M13 1H17M13 18H17" stroke="#d01818" stroke-width="1"/><path d="M6 8H8V12H13V15H6z" fill="#fff"/><path d="M5 2H11M5 18H11" stroke="#d01818"/></symbol>
    <symbol id="m-ae" viewBox="0 0 20 20"><path d="M2 17 17 4M2 12 13 11" stroke="#a01010" stroke-width="1.200"/><path d="M2 17 6 16 3 13z" fill="#a01010"/></symbol>
    <symbol id="m-af" viewBox="0 0 20 20"><path d="M3 18 18 2" stroke="#a01010" stroke-width="1.200"/><path d="M3 18 8 16 5 13z" fill="#a01010"/><path d="M6 8 12 5 14 9 9 12z" fill="none" stroke="#a01010"/></symbol>
    <symbol id="m-ag" viewBox="0 0 20 20"><path d="M2 18 18 2" stroke="#a01010" stroke-width="1.200"/><path d="M6 10 10 14 4 16zM14 10 10 6 16 4z" fill="#a01010"/></symbol>
    <symbol id="m-ah" viewBox="0 0 20 20"><path d="M10 4A7 7 0 1 1 5 14" fill="none" stroke="#555" stroke-width="1.500"/><path d="M10 1 6 4 10 7z" fill="none" stroke="#555"/></symbol>

    <!-- quick access -->
    <symbol id="q-save" viewBox="0 0 20 20"><path d="M3 2H14L17 5V18H3z" fill="none" stroke="#fff" stroke-width="1.300"/><path d="M6 2V7H13V2M6 18V11H14V18M8 13H12M8 15H12" fill="none" stroke="#fff"/></symbol>
    <symbol id="q-open" viewBox="0 0 20 20"><path d="M2 8H14V18H2z" fill="none" stroke="#fff" stroke-width="1.300"/><path d="M2 8 4 5H8L9 8M10 6C11 3 14 2 16 3M14 1 18 3 15 6" fill="none" stroke="#fff"/></symbol>
    <symbol id="q-undo" viewBox="0 0 20 20"><path d="M6 3 2 7 6 11M2 7H12C18 7 18 17 10 17" fill="none" stroke="#2d88ac" stroke-width="1.300"/></symbol>
    <symbol id="q-redo" viewBox="0 0 20 20"><path d="M14 3 18 7 14 11M18 7H8C2 7 2 17 10 17" fill="none" stroke="#2d88ac" stroke-width="1.300"/></symbol>
    <symbol id="q-fan" viewBox="0 0 20 20"><path d="M9 9C4 2 14 0 11 8 19 5 20 14 11 11 13 19 4 20 8 11 1 14 1 6 9 9z" fill="none" stroke="#2d88ac" stroke-width="1.200"/></symbol>
    <symbol id="q-copy" viewBox="0 0 20 20"><path d="M3 2H11V15H3zM8 6H17V18H8z" fill="none" stroke="#2d88ac" stroke-width="1.200"/></symbol>
    <symbol id="q-paste" viewBox="0 0 20 20"><path d="M3 4H13V17H3zM6 2H10V5H6zM10 9H17V18H10z" fill="none" stroke="#2d88ac" stroke-width="1.200"/></symbol>
    <symbol id="q-tgt" viewBox="0 0 20 20"><circle cx="10" cy="10" r="6" fill="none" stroke="#2d88ac" stroke-width="1.200"/><path d="M10 1V19M1 10H19M12 12 17 17" stroke="#2d88ac" stroke-width="1.200"/></symbol>
    <symbol id="q-col" viewBox="0 0 20 20"><path d="M1 1H19V19H1z" fill="#000" stroke="#666" stroke-width="2"/></symbol>
    <symbol id="q-mic" viewBox="0 0 20 20"><rect x="7" y="1" width="6" height="11" rx="3" fill="none" stroke="#fff" stroke-width="1.300"/><path d="M7 4H9M7 7H9" stroke="#fff"/><path d="M4 9C4 16 16 16 16 9M10 15V18M7 19H13" fill="none" stroke="#fff" stroke-width="1.300"/></symbol>
    <symbol id="q-tool" viewBox="0 0 20 20"><path d="M2 11 11 3 18 7 9 16z" fill="#ddd"/><path d="M6 9 11 14M10 6 15 11" stroke="#05719b" stroke-width="1.500"/></symbol>
    <symbol id="q-cast" viewBox="0 0 20 20"><path d="M9 2C13 6 17 12 18 15 13 19 5 18 3 15 5 12 6 5 9 2z" fill="#bbb"/><circle cx="11" cy="13" r="3" fill="#444"/></symbol>
    <symbol id="q-mach" viewBox="0 0 20 20"><path d="M2 2H6M2 7H6M2 12H6M2 17H6M6 2V17" fill="none" stroke="#fff" stroke-dasharray="2 1"/><path d="M9 8C10 4 15 4 17 7M17 3V8H13M17 12C15 16 11 16 9 13M9 18V13H13" fill="none" stroke="#fff" stroke-width="1.200"/></symbol>
    <symbol id="q-a" viewBox="0 0 20 20"><path d="M4 14 12 5 15 1V13C15 18 8 19 4 14z" fill="#ccc"/><circle cx="10" cy="13" r="2.500" fill="#444"/></symbol>
    <symbol id="q-b" viewBox="0 0 20 20"><path d="M4 5H16V18H4z" fill="none" stroke="#fff" stroke-width="1.300"/><circle cx="10" cy="12" r="3" fill="#fff"/><path d="M6 2H14V5H6z" fill="#fff"/></symbol>
    <symbol id="q-chk" viewBox="0 0 20 20"><path d="M2 2H18V18H2z" fill="#000" stroke="#ddd"/><path d="M5 10 9 14 15 5" fill="none" stroke="#fff" stroke-width="1.400"/></symbol>
    <symbol id="q-c" viewBox="0 0 20 20"><path d="M6 3 14 1 16 8 11 18 6 16z" fill="#aaa"/><path d="M8 4 13 3" stroke="#eee" stroke-width="2"/></symbol>
    <symbol id="q-d" viewBox="0 0 20 20"><path d="M9 3C13 6 17 12 18 15 13 19 5 18 3 15 5 12 6 5 9 3z" fill="#bbb"/><circle cx="11" cy="13" r="3" fill="#444"/><path d="M13 1 17 6M17 1 13 6" stroke="#e87a10"/></symbol>
    <symbol id="q-wins" viewBox="0 0 20 20"><path d="M1 1H13V13H1zM6 7H19V19H6z" fill="#05719b" stroke="#fff" stroke-width="1.200"/><path d="M1 4H13M6 10H19" stroke="#fff"/></symbol>
    <symbol id="q-win" viewBox="0 0 20 20"><path d="M2 2H18V18H2z" fill="none" stroke="#fff" stroke-width="1.300"/><path d="M2 5H18" stroke="#fff"/></symbol>
    <symbol id="q-lst" viewBox="0 0 20 20"><path d="M5 5H15M7 10H13L10 14z" fill="#fff" stroke="#fff"/></symbol>

    <!-- tool strip -->
    <symbol id="t-ham" viewBox="0 0 20 20"><path d="M3 4H17M3 10H17M3 16H17" stroke="#555" stroke-width="1.300"/></symbol>
    <symbol id="t-fil" viewBox="0 0 20 20"><path d="M3 2H14L12 7H5z" fill="none" stroke="#666"/><path d="M6 7H16V19H6z" fill="none" stroke="#666"/><path d="M9 10H13M9 13H13M9 16H13" stroke="#777" stroke-dasharray="2 1"/></symbol>
    <symbol id="t-cyl" viewBox="0 0 20 20"><path d="M3 5V15C3 20 17 20 17 15V5z" fill="url(#gg)"/><ellipse cx="10" cy="5" rx="7" ry="3.500" fill="#e8e8e8"/></symbol>
    <symbol id="t-cyo" viewBox="0 0 20 20"><path d="M3 5V15C3 20 17 20 17 15V5z" fill="url(#gg)"/><ellipse cx="10" cy="5" rx="7" ry="3.500" fill="#eee"/><path d="M10 4 13 10 10 17" fill="none" stroke="#d06a20"/></symbol>
    <symbol id="t-box" viewBox="0 0 20 20"><path d="M10 1 18 5V15L10 19 2 15V5zM2 5 10 9 18 5M10 9V19" fill="none" stroke="#bbb"/><path d="M10 1V9M2 15 10 9 18 15" fill="none" stroke="#777" stroke-width=".6"/></symbol>
    <symbol id="t-shade" viewBox="0 0 20 20"><path d="M2 1H18V19H2z" fill="url(#gk)" stroke="#777"/></symbol>
    <symbol id="t-c1" viewBox="0 0 20 20"><path d="M2 19C5 14 7 10 15 2" fill="none" stroke="#0a9fc8" stroke-width="1.200"/><path d="M9 7 13 9 10 12 6 10z" fill="none" stroke="#666" stroke-width="1.400"/></symbol>
    <symbol id="t-c2" viewBox="0 0 20 20"><path d="M10 1V18" stroke="#0a9fc8"/><path d="M1 10C6 7 8 13 13 10S18 9 19 11" fill="none" stroke="#0a9fc8" stroke-width="1.200"/></symbol>
    <symbol id="t-c3" viewBox="0 0 20 20"><path d="M2 2C10 2 16 8 16 17" fill="none" stroke="#0a9fc8" stroke-width="1.200"/><path d="M18 18 15 4" stroke="#555"/></symbol>
    <symbol id="t-c4" viewBox="0 0 20 20"><path d="M2 1 18 19M18 1 2 19" stroke="#f07810" stroke-width="1"/><path d="M2 1 10 10 2 19" fill="none" stroke="#0a9fc8" stroke-width="1"/></symbol>
    <symbol id="t-c5" viewBox="0 0 20 20"><path d="M1 10H19" stroke="#0a9fc8"/><path d="M7 5V15M13 5V15" stroke="#0a9fc8" stroke-width="1.200"/></symbol>
    <symbol id="t-c6" viewBox="0 0 20 20"><path d="M2 18H10C15 18 17 14 17 1" fill="none" stroke="#0a9fc8" stroke-width="1.200"/></symbol>
    <symbol id="t-c7" viewBox="0 0 20 20"><path d="M1 7C6 3 10 9 18 4" fill="none" stroke="#0a9fc8" stroke-width="1.200"/><path d="M1 13C6 9 12 17 19 11" fill="none" stroke="#f07810" stroke-width="1.200"/></symbol>
    <symbol id="t-pct" viewBox="0 0 20 20"><circle cx="6" cy="5" r="3.500" fill="none" stroke="#555" stroke-width="1.500"/><circle cx="14" cy="14" r="4" fill="none" stroke="#555" stroke-width="1.500"/><path d="M17 1 3 19" stroke="#555" stroke-width="1.500"/></symbol>
    <symbol id="t-brk" viewBox="0 0 20 20"><path d="M6 1H2V19H6M14 1H18V19H14" fill="none" stroke="#e87a10" stroke-width="1.200"/><circle cx="10" cy="10" r="4.500" fill="#555"/><circle cx="10" cy="10" r="2" fill="#222"/></symbol>

    <!-- left strip -->
    <symbol id="l-gear" viewBox="0 0 20 20"><circle cx="10" cy="10" r="5.500" fill="none" stroke="#fff" stroke-width="3"/><path d="M10 1V4M10 16V19M1 10H4M16 10H19M3.500 3.500 5.500 5.500M14.500 14.500 16.500 16.500M16.500 3.500 14.500 5.500M5.500 14.500 3.500 16.500" stroke="#fff" stroke-width="2.600"/></symbol>
    <symbol id="l-a" viewBox="0 0 28 28"><path d="M15 4 24 8V14L18 17V24L10 28 4 24V12L10 9V7z" fill="#aaa"/><path d="M15 4 24 8 18 11 10 7zM4 12 10 9 18 13 11 17z" fill="#eee"/></symbol>
    <symbol id="l-b" viewBox="0 0 28 28"><path d="M12 3 22 7V18L14 22z" fill="#bbb"/><path d="M2 8 11 5 14 8V21L7 24 2 21z" fill="#ddd"/><path d="M2 8 11 5 14 8 7 12 2 10z" fill="url(#go)"/><path d="M2 10 7 12V18L2 16z" fill="#e87a10"/><path d="M12 16 18 22 12 27zM27 15 21 21 27 27z" fill="#fff"/></symbol>
    <symbol id="l-c" viewBox="0 0 28 28"><path d="M2 19C4 12 10 7 13 4 15 7 23 12 26 17 27 21 18 26 10 25 5 24 2 22 2 19z" fill="#bbb"/><ellipse cx="16" cy="19" rx="6" ry="3" fill="#444"/><path d="M4 17 13 9" stroke="#eee" stroke-width="2"/></symbol>
    <symbol id="l-d" viewBox="0 0 28 28"><path d="M2 21C4 15 10 11 13 8 15 11 22 14 25 19 25 23 18 27 10 27 5 26 2 24 2 21z" fill="#bbb"/><ellipse cx="15" cy="21" rx="6" ry="3" fill="#444"/><path d="M10 1H19L21 4V14M16 1 24 1M24 -1 27 3M27 -1 24 3" fill="none" stroke="#e87a10" stroke-width="1.200"/></symbol>
    <symbol id="l-e" viewBox="0 0 28 28"><path d="M2 18 13 11 21 16 11 24z" fill="#ddd"/><path d="M2 18 11 24 11 27 2 21z" fill="#888"/><circle cx="20" cy="17" r="6" fill="#fff"/><path d="M15 21 11 26" stroke="#aaa" stroke-width="2"/><path d="M2 10 14 4M2 7V12M14 2V7" stroke="#e87a10" stroke-width="1.200"/></symbol>
    <symbol id="l-f" viewBox="0 0 28 28"><circle cx="12" cy="16" r="9" fill="url(#gw)"/><path d="M12 11V20M12 8V9" stroke="#fff" stroke-width="2"/><path d="M15 3C20 3 25 7 26 13M15 6C18 6 22 9 23 13" fill="none" stroke="#999" stroke-width="1.200"/></symbol>
    <symbol id="l-g" viewBox="0 0 28 28"><path d="M1 1H27V27H1z" fill="#000" stroke="#555"/><path d="M1 4H27" stroke="#555"/><circle cx="14" cy="15" r="10" fill="#2d8fb0"/><path d="M9 10 14 8 17 12 12 15zM15 16 21 14 20 21 15 21z" fill="#cde"/></symbol>
    <symbol id="l-h" viewBox="0 0 28 28"><circle cx="14" cy="14" r="12" fill="none" stroke="#3a3a3a" stroke-width="1.200"/><path d="M14 5V14H5" fill="none" stroke="#3a3a3a" stroke-width="1.200"/></symbol>
    <symbol id="l-i" viewBox="0 0 28 28"><path d="M5 2H13V24H5z" fill="url(#gr)"/><path d="M15 0V10M10 5H20M11 1 19 9M19 1 11 9" stroke="#fff"/><circle cx="23" cy="22" r="1.500" fill="#fff"/></symbol>
    <symbol id="l-j" viewBox="0 0 28 28"><path d="M5 8H12V24H5z" fill="#3a78d8"/><path d="M14 8H28L20 12M16 14H26L18 17" fill="none" stroke="#3a78d8"/><path d="M2 26H12" stroke="#e8c020" stroke-width="2"/><path d="M13 2V12M8 7H18M9 3 17 11M17 3 9 11" stroke="#fff"/><circle cx="23" cy="25" r="1.500" fill="#fff"/></symbol>
    <symbol id="l-k" viewBox="0 0 28 28"><path d="M2 4H9L11 6H27V27H2z" fill="#fff"/><path d="M7 11 21 24M21 11 8 24" stroke="#444" stroke-width="3"/><circle cx="7" cy="11" r="3" fill="none" stroke="#444" stroke-width="2"/></symbol>

    <!-- right bar -->
    <symbol id="b-line" viewBox="0 0 36 36"><path d="M3 34 33 2" stroke="#0a9fc8" stroke-width="1"/></symbol>
    <symbol id="b-arc" viewBox="0 0 36 36"><path d="M3 33C3 16 16 3 34 3" fill="none" stroke="#0a9fc8" stroke-width="1.200"/></symbol>
    <symbol id="p1" viewBox="0 0 26 26"><path d="M0 2H8L25 19V26" fill="none" stroke="#555"/><path d="M8 2 25 19" stroke="#0a9fc8"/></symbol>
    <symbol id="p2" viewBox="0 0 26 26"><circle cx="9" cy="9" r="7.500" fill="none" stroke="#0a9fc8"/><path d="M11 24 25 11" stroke="#0a9fc8"/></symbol>
    <symbol id="p3" viewBox="0 0 26 26"><path d="M1 13 7 2H19L25 13 19 24H7z" fill="none" stroke="#0a9fc8"/></symbol>
    <symbol id="p4" viewBox="0 0 26 26"><path d="M1 5H25V21H1z" fill="none" stroke="#0a9fc8"/></symbol>
    <symbol id="p5" viewBox="0 0 26 26"><path d="M1 25V2H25M1 13H25" fill="none" stroke="#777"/><path d="M25 2C10 0 0 8 2 14 4 22 14 25 25 24" fill="none" stroke="#0a9fc8"/></symbol>
    <symbol id="p6" viewBox="0 0 26 26"><path d="M2 2 24 24M24 2 2 24" stroke="#888"/><path d="M24 2C16 8 16 18 24 24" fill="none" stroke="#0a9fc8"/></symbol>
    <symbol id="p7" viewBox="0 0 26 26"><path d="M1 25C2 10 8 2 13 2S24 10 25 25" fill="none" stroke="#0a9fc8" stroke-width="1.100"/></symbol>
    <symbol id="p8" viewBox="0 0 26 26"><g fill="none" stroke="#0a9fc8"><ellipse cx="13" cy="6" rx="11" ry="4"/><ellipse cx="13" cy="11" rx="11" ry="4"/><ellipse cx="13" cy="15" rx="11" ry="4"/><ellipse cx="13" cy="20" rx="11" ry="4"/></g></symbol>
    <symbol id="p10" viewBox="0 0 26 26"><path d="M4 9 19 2 25 9 15 24 2 19z" fill="#ddd"/><path d="M5 20C8 12 14 9 22 6" fill="none" stroke="#0a9fc8"/><path d="M6 12C9 8 14 7 19 4 20 10 14 16 8 19z" fill="#0a9fc8" opacity=".5"/></symbol>
    <symbol id="p11" viewBox="0 0 26 26"><path d="M1 25C3 12 18 17 25 1" fill="none" stroke="#0a9fc8" stroke-width="1.100"/></symbol>
    <symbol id="p12" viewBox="0 0 26 26"><ellipse cx="13" cy="13" rx="12" ry="9" fill="none" stroke="#0a9fc8"/></symbol>
    <symbol id="p13" viewBox="0 0 26 26"><ellipse cx="7" cy="9" rx="5" ry="5" fill="none" stroke="#0a9fc8"/><ellipse cx="19" cy="8" rx="5" ry="3.500" fill="none" stroke="#0a9fc8"/><path d="M2 22C8 17 14 25 24 20" fill="none" stroke="#0a9fc8"/><path d="M1 3H25M1 15H25M2 25H24" stroke="#f07810" stroke-dasharray="1 4"/></symbol>
    <symbol id="p14" viewBox="0 0 26 26"><path d="M1 25C2 10 14 11 21 6 24 3 25 2 25 0" fill="none" stroke="#0a9fc8"/><path d="M8 23 20 9" stroke="#ddd" stroke-width="2"/><path d="M14 10 22 5 20 13z" fill="#c8b040"/></symbol>
    <symbol id="p15" viewBox="0 0 26 26"><path d="M1 24C8 22 18 13 25 3" fill="none" stroke="#0a9fc8"/><path d="M6 15 14 23M14 10 21 18M18 3 24 8" stroke="#888"/></symbol>
    <symbol id="p16" viewBox="0 0 26 26"><path d="M13 1C19 8 21 14 18 21 15 26 9 26 7 21 5 15 11 12 13 1z" fill="#ef8010"/><path d="M13 10C16 15 16 19 14 22 11 22 10 18 13 10z" fill="#ffd070"/></symbol>
    <symbol id="w-prof" viewBox="0 0 36 36"><path d="M2 2H22V10H34V32H14C7 32 2 26 2 20z" fill="none" stroke="#0a9fc8"/><path d="M7 7H18V15H28V26H17C11 26 7 22 7 17z" fill="none" stroke="#e87a10"/></symbol>
    <symbol id="w-surf" viewBox="0 0 36 36"><path d="M2 11 22 0 34 14C33 22 30 30 27 34L12 24z" fill="#eee"/><path d="M9 11 24 3M14 14C17 18 18 24 18 30" fill="none" stroke="#0a9fc8" stroke-width="1.200"/></symbol>
    <symbol id="x1" viewBox="0 0 26 26"><path d="M1 11 17 2 25 10 20 25 6 20z" fill="#ddd"/><path d="M4 14 22 6M8 18 24 11M9 5 14 22M16 3 20 20" stroke="#0a9fc8"/></symbol>
    <symbol id="x2" viewBox="0 0 26 26"><path d="M1 12 14 4 25 14 17 25z" fill="#ccc"/><path d="M9 1 25 10V25L9 14z" fill="#d86090" opacity=".7"/><path d="M5 9 20 22" stroke="#0a9fc8" stroke-width="1.200"/></symbol>
    <symbol id="x3" viewBox="0 0 26 26"><ellipse cx="13" cy="14" rx="12" ry="8" fill="none" stroke="#e87a10" transform="rotate(-15 13 14)"/><ellipse cx="14" cy="12" rx="7" ry="6" fill="none" stroke="#0a9fc8"/></symbol>
    <symbol id="x4" viewBox="0 0 26 26"><path d="M1 14 16 7 25 16 16 25z" fill="#ddd"/><path d="M6 12C12 10 18 14 24 22" fill="none" stroke="#e87a10" stroke-width="1.200"/><path d="M6 2C12 0 20 1 25 5" fill="none" stroke="#0a9fc8"/></symbol>
    <symbol id="x5" viewBox="0 0 26 26"><path d="M1 25C4 12 20 20 25 1" fill="none" stroke="#e87a10"/><path d="M1 25C2 20 4 17 8 17" fill="none" stroke="#0a9fc8"/></symbol>
    <symbol id="x6" viewBox="0 0 26 26"><path d="M1 16V23C1 27 17 27 17 23V16z" fill="#999"/><ellipse cx="9" cy="16" rx="8" ry="4" fill="#bbb"/><path d="M3 21 15 11" stroke="#eee" stroke-width="2"/><path d="M13 4H17V1H20V4H23V1H25V12H20V8H16V12H14z" fill="none" stroke="#e87a10" stroke-width="1.400"/></symbol>
    <symbol id="x7" viewBox="0 0 26 26"><rect x="1" y="6" width="10" height="17" rx="2" fill="url(#gb)"/><path d="M13 14H19M19 10 23 14 19 18" fill="none" stroke="#e87a10" stroke-width="2"/><path d="M20 1C26 7 26 19 20 25" fill="none" stroke="#c01010" stroke-width="2"/></symbol>
    <symbol id="x8" viewBox="0 0 26 26"><path d="M2 5V21C2 27 24 27 24 21V5z" fill="url(#gw)"/><ellipse cx="13" cy="5" rx="11" ry="4" fill="#f2f2f2"/><path d="M13 6V21M7 13H19" stroke="#0a9fc8"/></symbol>
    <symbol id="x9" viewBox="0 0 26 26"><path d="M1 8C8 4 14 12 25 8" fill="none" stroke="#0a9fc8"/><path d="M1 19C4 16 7 18 10 18" fill="none" stroke="#e87a10"/><path d="M12 19C16 21 22 17 25 17" fill="none" stroke="#e87a10" stroke-dasharray="3 1"/></symbol>
    <symbol id="x10" viewBox="0 0 26 26"><path d="M4 25V4" stroke="#e87a10"/><path d="M4 25H25" stroke="#e87a10"/><path d="M1 12C6 6 14 1 25 1" fill="none" stroke="#0a9fc8"/><circle cx="16" cy="15" r="6" fill="none" stroke="#0a9fc8"/></symbol>
    <symbol id="x11" viewBox="0 0 26 26"><path d="M1 8 14 1 20 12 8 20z" fill="#ddd"/><path d="M4 3C10 10 6 20 2 24" fill="none" stroke="#0a9fc8" stroke-width="2"/><path d="M8 8 25 20" stroke="#e87a10" stroke-width="1.400"/></symbol>
    <symbol id="x12" viewBox="0 0 26 26"><path d="M6 2H20V24H6z" fill="url(#gg)"/><path d="M1 2 12 15C15 20 20 15 25 11" fill="none" stroke="#0a9fc8"/><path d="M6 4C12 9 12 20 18 22" fill="none" stroke="#e87a10" stroke-width="1.400"/></symbol>
    <symbol id="x13" viewBox="0 0 26 26"><circle cx="11" cy="15" r="10" fill="url(#gs)"/><path d="M1 15H20" stroke="#0a9fc8"/><path d="M14 3 25 18" stroke="#888"/><path d="M19 2 22 10H20V17H18V10H16z" fill="#d86090"/></symbol>
    <symbol id="x14" viewBox="0 0 26 26"><path d="M1 25C4 12 16 17 25 1" fill="none" stroke="#0a9fc8"/><path d="M12 12H25V25H12z" fill="none" stroke="#555"/><path d="M15 22 22 15M18 15H22V19" fill="none" stroke="#555"/></symbol>
    <symbol id="x15" viewBox="0 0 26 26"><path d="M2 4C10 1 18 1 24 3V16L14 24z" fill="none" stroke="#888"/><path d="M2 8C8 14 12 20 14 24" fill="none" stroke="#0a9fc8" stroke-width="1.400"/><path d="M2 4C10 1 18 1 24 3" fill="none" stroke="#0a9fc8" stroke-width="1.400"/><path d="M8 8C14 8 20 10 22 16" fill="none" stroke="#e87a10" stroke-width="2"/></symbol>
    <symbol id="x16" viewBox="0 0 26 26"><path d="M1 10 9 2 14 6 22 4 25 14 20 24 12 20 5 22z" fill="#ccc"/><path d="M5 9C12 9 18 12 24 21" fill="none" stroke="#0a9fc8" stroke-width="1.400"/></symbol>
    <symbol id="x17" viewBox="0 0 26 26"><path d="M1 25C4 14 18 18 25 1" fill="none" stroke="#0a9fc8"/><path d="M10 25 13 10V25zM16 10 23 25H16z" fill="none" stroke="#666"/></symbol>
    <symbol id="x18" viewBox="0 0 26 26"><path d="M1 9C8 1 12 12 18 10S23 9 25 8" fill="none" stroke="#0a9fc8" stroke-width="1.100"/><path d="M1 18C8 12 14 22 25 18" fill="none" stroke="#e87a10" stroke-width="1.100"/></symbol>
    <symbol id="z-sk" viewBox="0 0 20 20"><path d="M2 1V12C2 16 5 18 8 18H17V11H11V7" fill="none" stroke="#0a9fc8"/><path d="M8 9 11 6 14 9" fill="none" stroke="#0a9fc8"/></symbol>
    <symbol id="z-rc" viewBox="0 0 20 20"><path d="M1 4H19V16H1z" fill="none" stroke="#0a9fc8"/></symbol>
    <symbol id="z-ln" viewBox="0 0 20 20"><path d="M1 19 19 1" stroke="#0a9fc8"/></symbol>
    <symbol id="z-ar" viewBox="0 0 20 20"><path d="M1 19C1 10 8 2 19 1" fill="none" stroke="#0a9fc8"/></symbol>
    <symbol id="z-ci" viewBox="0 0 20 20"><circle cx="10" cy="10" r="8.500" fill="none" stroke="#0a9fc8"/></symbol>
  </defs>
</svg>

<header class="nx-head">
  <div class="qa-row d-flex align-items-center">
    <span class="nx-logo">NX</span>
    <span class="qa-sep"></span>
    <span class="qa"><svg class="i20"><use href="#q-save"/></svg></span>
    <span class="qa"><svg class="i20"><use href="#q-open"/></svg></span>
    <span class="qa-sep"></span>
    <span class="qa"><svg class="i20"><use href="#q-undo"/></svg></span>
    <span class="qa-a"><span class="tri opacity-25"></span></span>
    <span class="qa"><svg class="i20"><use href="#q-redo"/></svg></span>
    <span class="qa-sep"></span>
    <span class="qa"><svg class="i20"><use href="#q-fan"/></svg></span>
    <span class="qa"><svg class="i20"><use href="#q-copy"/></svg></span>
    <span class="qa"><svg class="i20"><use href="#q-paste"/></svg></span>
    <span class="qa"><svg class="i20"><use href="#q-tgt"/></svg></span>
    <span class="qa-sep"></span>
    <span class="qa"><svg class="i20"><use href="#q-col"/></svg></span>
    <span class="qa-a"><span class="tri"></span></span>
    <span class="qa-sep"></span>
    <span class="qa"><svg class="i20"><use href="#q-mic"/></svg></span>
    <span class="qa-sep"></span>
    <span class="qa"><svg class="i20"><use href="#q-tool"/></svg></span>
    <span class="qa-sep"></span>
    <span class="qa qa-c"><svg class="i20"><use href="#q-cast"/></svg></span>
    <span class="qa-t qa-gap6">建模</span>
    <span class="qa qa-w"><svg class="i20"><use href="#q-mach"/></svg></span>
    <span class="qa-t qa-gap3">加工</span>
    <span class="qa qa-n"><svg class="i20"><use href="#q-a"/></svg></span>
    <span class="qa qa-n"><svg class="i20"><use href="#q-b"/></svg></span>
    <span class="qa qa-n"><svg class="i14"><use href="#q-chk"/></svg></span>
    <span class="qa qa-n"><svg class="i20"><use href="#q-c"/></svg></span>
    <span class="qa qa-n"><svg class="i14"><use href="#q-chk"/></svg></span>
    <span class="qa qa-n"><svg class="i20"><use href="#q-d"/></svg></span>
    <span class="qa qa-n"><svg class="i20"><use href="#q-wins"/></svg></span>
    <span class="qa qa-n qa-gap2"><svg class="i20"><use href="#q-win"/></svg></span>
    <span class="qa-t">窗口</span>
    <span class="qa-a"><span class="tri"></span></span>
    <span class="qa-a"><svg class="i14"><use href="#q-lst"/></svg></span>
    <span class="nx-title">NX - 建模</span>
    <span class="nx-siemens">SIEMENS</span>
    <span class="win-btn"><svg class="i14"><path d="M3 12H11" stroke="#fff" stroke-width="2"/></svg></span>
    <span class="win-btn"><svg class="i14"><path d="M2 5H9V12H2zM5 5V2H12V9H9" fill="none" stroke="#fff" stroke-width="1.200"/></svg></span>
    <span class="win-btn"><svg class="i14"><path d="M1 1 13 13M13 1 1 13" stroke="#fff" stroke-width="1.600"/></svg></span>
  </div>
  <div class="tab-row d-flex align-items-center">
    <ul class="nav flex-nowrap">
      <li class="nav-item"><a class="nav-link tb-file" href="#">文件(F)</a></li>
      <li class="nav-item"><a class="nav-link tb-01" href="#">01</a></li>
      <li class="nav-item"><a class="nav-link active" href="#">主页</a></li>
      <li class="nav-item"><a class="nav-link" href="#">装配</a></li>
      <li class="nav-item"><a class="nav-link" href="#">曲线</a></li>
      <li class="nav-item"><a class="nav-link" href="#">曲面</a></li>
      <li class="nav-item"><a class="nav-link" href="#">逆向工程</a></li>
      <li class="nav-item"><a class="nav-link" href="#">视图</a></li>
      <li class="nav-item"><a class="nav-link" href="#">渲染</a></li>
      <li class="nav-item"><a class="nav-link" href="#">应用模块</a></li>
      <li class="nav-item"><a class="nav-link" href="#">工具</a></li>
      <li class="nav-item"><a class="nav-link" href="#">PMI</a></li>
      <li class="nav-item"><a class="nav-link" href="#">选择</a></li>
      <li class="nav-item"><a class="nav-link" href="#">多边形建模</a></li>
      <li class="nav-item"><a class="nav-link" href="#">分析</a></li>
      <li class="nav-item"><a class="nav-link" href="#">增材制造设计</a></li>
    </ul>
    <div class="nx-search d-flex align-items-center justify-content-between">
      <span>在此输入以搜索</span>
      <svg class="i14 me-1"><path d="M1 13 6 8" stroke="#777" stroke-width="1.500"/><circle cx="9" cy="5" r="4" fill="none" stroke="#777"/></svg>
    </div>
    <span class="head-ic"><svg class="i26"><path d="M2 8V2H8M18 2H24V8M24 18V24H18M8 24H2V18" fill="none" stroke="#fff" stroke-width="1.200"/></svg></span>
    <span class="head-ic"><svg class="i26"><path d="M3 19 13 8 23 19" fill="none" stroke="#fff" stroke-width="1.200"/></svg></span>
    <span class="head-ic"><svg class="i26"><circle cx="13" cy="13" r="11" fill="none" stroke="#fff" stroke-width="1.200"/><text x="13" y="19" text-anchor="middle" fill="#fff" font-size="16" font-family="Liberation Sans">?</text></svg></span>
    <span class="head-ic"><svg class="i26"><path d="M13 2V19M13 22V25" stroke="#fff" stroke-width="2"/></svg></span>
  </div>
</header>

<section class="nx-ribbon d-flex">
  <div class="rg w-gz">
    <div class="rg-body pad-gz">
      <div class="rb"><svg class="i32"><use href="#r-sk"/></svg><span class="lbl">草图</span><span class="tri"></span></div>
      <div class="rb"><svg class="i32"><use href="#r-sk"/></svg><span class="lbl">草图</span></div>
    </div>
    <div class="rg-foot"><span>构造</span><span class="tri"></span></div>
  </div>
  <div class="rg w-jb">
    <div class="rg-body pad-jb">
      <div class="rb"><svg class="i32"><use href="#r-ext"/></svg><span class="lbl">拉伸</span></div>
      <div class="rb"><svg class="i32"><use href="#r-rev"/></svg><span class="lbl">旋转</span></div>
      <div class="rb"><svg class="i32"><use href="#r-hole"/></svg><span class="lbl">孔</span></div>
      <div class="rb"><svg class="i32"><use href="#r-uni"/></svg><span class="lbl">合并</span></div>
      <div class="rb"><svg class="i32"><use href="#r-sub"/></svg><span class="lbl">减去</span></div>
      <div class="rb"><svg class="i32"><use href="#r-boss"/></svg><span class="lbl">凸起体</span><span class="tri"></span></div>
      <div class="rb"><svg class="i32"><use href="#r-bld"/></svg><span class="lbl">边倒圆</span><span class="tri"></span></div>
      <div class="rb"><svg class="i32"><use href="#r-chm"/></svg><span class="lbl">倒斜角</span></div>
      <div class="rc rc-a">
        <div class="rs"><svg class="i24"><use href="#s-dft"/></svg>拔模</div>
        <div class="rs"><svg class="i24"><use href="#s-shl"/></svg>抽壳</div>
      </div>
      <div class="rc rc-b">
        <div class="rs"><svg class="i24"><use href="#s-pat"/></svg>阵列特征</div>
        <div class="rs"><svg class="i24"><use href="#s-mir"/></svg>镜像特征</div>
      </div>
      <div class="rb"><svg class="i32"><use href="#r-more"/></svg><span class="lbl">更多</span><span class="tri"></span></div>
    </div>
    <div class="rg-foot"><span>基本</span><span class="tri"></span></div>
  </div>
  <div class="rg w-tb">
    <div class="rg-body pad-tb">
      <div class="rb"><svg class="i32"><use href="#r-move"/></svg><span class="lbl">移动</span></div>
      <div class="rb"><svg class="i32"><use href="#r-del"/></svg><span class="lbl">删除</span></div>
      <div class="rb"><svg class="i32"><use href="#r-rep"/></svg><span class="lbl">替换</span></div>
      <div class="rc rc-c">
        <div class="rs"><svg class="i24"><use href="#s-off"/></svg>偏置</div>
        <div class="rs"><svg class="i24"><use href="#s-rsz"/></svg>调整圆角大小</div>
      </div>
      <div class="rb"><svg class="i32"><use href="#r-ref"/></svg><span class="lbl">更多</span><span class="tri"></span></div>
    </div>
    <div class="rg-foot"><span>同步建模</span><span class="tri"></span></div>
  </div>
  <div class="rg w-bz">
    <div class="rg-body"><div class="mg">
      <div class="mr"><span class="mi"><svg class="i20"><use href="#m-a"/></svg></span><span class="mi"><svg class="i20"><use href="#m-b"/></svg></span><span class="mi"><svg class="i20"><use href="#m-c"/></svg></span><span class="msep"></span><span class="mi"><svg class="i20"><use href="#m-d"/></svg></span></div>
      <div class="mr"><span class="mi"><svg class="i20"><use href="#m-e"/></svg></span><span class="mi"><svg class="i20"><use href="#m-f"/></svg></span><span class="mi"><svg class="i20"><use href="#m-g"/></svg></span><span class="msep"></span><span class="mi"><svg class="i20"><use href="#m-h"/></svg></span></div>
    </div></div>
    <div class="rg-foot"><span>标准化工具 - G...</span><span class="tri"></span></div>
  </div>
  <div class="rg w-cl">
    <div class="rg-body"><div class="mg">
      <div class="mr"><span class="mi"><svg class="i20"><use href="#m-i"/></svg></span><span class="mi"><svg class="i20"><use href="#m-j"/></svg></span></div>
      <div class="mr"><span class="mi"><svg class="i20"><use href="#m-k"/></svg></span><span class="mi"><svg class="i20"><use href="#m-l"/></svg></span></div>
    </div></div>
    <div class="rg-foot"><span>齿轮...</span><span class="tri"></span></div>
  </div>
  <div class="rg w-th">
    <div class="rg-body"><div class="mg">
      <div class="mr"><span class="mi"><svg class="i20"><use href="#m-n"/></svg></span><span class="mi"><svg class="i20"><use href="#m-o"/></svg></span></div>
      <div class="mr"><span class="mi"><svg class="i20"><use href="#m-p"/></svg></span><span class="msep"></span><span class="mi"><svg class="i20"><use href="#m-q"/></svg></span></div>
    </div></div>
    <div class="rg-foot"><span>弹簧...</span><span class="tri"></span></div>
  </div>
  <div class="rg w-jg">
    <div class="rg-body"><div class="mg">
      <div class="mr"><span class="mi"><svg class="i20"><use href="#m-r"/></svg></span><span class="mi"><svg class="i20"><use href="#m-s"/></svg></span></div>
      <div class="mr"><span class="mi"><svg class="i20"><use href="#m-t"/></svg></span><span class="mi"><svg class="i20"><use href="#m-u"/></svg></span></div>
    </div></div>
    <div class="rg-foot"><span>加工...</span><span class="tri"></span></div>
  </div>
  <div class="rg w-jm">
    <div class="rg-body"><div class="mg">
      <div class="mr"><span class="mi"></span><span class="mi"><svg class="i20"><use href="#m-v"/></svg></span><span class="mi"><svg class="i20"><use href="#m-w"/></svg></span><span class="mi"><svg class="i20"><use href="#m-x"/></svg></span></div>
      <div class="mr"><span class="mi"><svg class="i20"><use href="#m-y"/></svg></span><span class="mi"><svg class="i20"><use href="#m-z"/></svg></span><span class="msep"></span><span class="mi"><svg class="i20"><use href="#m-aa"/></svg></span><span class="msep"></span><span class="mi"><svg class="i20"><use href="#m-ab"/></svg></span></div>
    </div></div>
    <div class="rg-foot"><span>建模工具 - GC工...</span><span class="tri"></span></div>
  </div>
  <div class="rg w-p">
    <div class="rg-body"><div class="mg">
      <div class="mr"><span class="mi"><svg class="i20"><use href="#m-ac"/></svg></span></div>
      <div class="mr"><span class="mi"><svg class="i20"><use href="#m-ac"/></svg></span></div>
    </div></div>
    <div class="rg-foot"><span>P...</span><span class="tri"></span></div>
  </div>
  <div class="rg w-cc">
    <div class="rg-body"><div class="mg mw">
      <div class="mr"><span class="mi"><svg class="i20"><use href="#m-ad"/></svg></span><span class="msep"></span><span class="mi"></span>
        <span class="mi tol">±.05</span>
        <span class="mi tol">+.05<br>−.02</span>
        <span class="mi tol tol-g">+.00<br>−.00</span>
        <span class="mi tol"><span class="tol-g2">+.00</span><br>−.02</span>
        <span class="mi"><svg class="i20"><path d="M2 3H18V17H2z" fill="none" stroke="#a01010"/></svg></span>
        <span class="mi"><svg class="i20"><path d="M5 2C1 7 1 13 5 18M15 2C19 7 19 13 15 18" fill="none" stroke="#a01010"/></svg></span>
        <span class="mi tol tol-b">10H7</span>
        <span class="mi tol tol-b">10H7<span class="tol-s">(0.01)</span></span>
        <span class="mi tol tol-b">10H7<span class="tol-s">(0.018)</span></span>
        <span class="mi tol tol-b">10<span class="tol-s">(0.018)</span></span>
      </div>
      <div class="mr"><span class="mi"><svg class="i20"><use href="#m-ae"/></svg></span><span class="mi"><svg class="i20"><use href="#m-af"/></svg></span><span class="msep"></span><span class="mi"><svg class="i20"><use href="#m-ag"/></svg></span><span class="mi"><svg class="i20"><use href="#m-ag"/></svg></span><span class="mi"><svg class="i20"><use href="#m-ah"/></svg></span></div>
    </div></div>
    <div class="rg-foot"><span>尺寸快速格式化工具 - GC工具箱</span><span class="tri"></span></div>
  </div>
  <div class="rg w-end">
    <div class="rg-body"></div>
    <div class="rg-foot"><span></span><span class="tri"></span></div>
  </div>
</section>

<section class="nx-tools">
  <div class="tl-menu d-flex align-items-center"><svg class="i14"><use href="#t-ham"/></svg><span>菜单(<u>M</u>)</span><span class="tri"></span></div>
  <span class="tl-sep"></span>
  <div class="tl-sel tl-s1"><span class="tri"></span></div>
  <div class="tl-sel tl-s2"><span>仅在工作部件内</span><span class="tri"></span></div>
  <span class="tl-i tl-gap1"><svg class="i20"><use href="#t-fil"/></svg></span><span class="tl-a"><span class="tri"></span></span>
  <span class="tl-a tl-gap2"><span class="tri"></span></span>
  <span class="tl-i tl-gap3"><svg class="i20"><use href="#t-cyo"/></svg></span>
  <span class="tl-sep tl-gap6"></span>
  <span class="tl-i tl-gap4"><svg class="i20"><use href="#t-c1"/></svg></span>
  <span class="tl-i"><svg class="i20"><use href="#t-c2"/></svg></span>
  <span class="tl-i"><svg class="i20"><use href="#t-c3"/></svg></span>
  <span class="tl-i"><svg class="i20"><use href="#t-c4"/></svg></span>
  <span class="tl-i"><svg class="i20"><use href="#t-c5"/></svg></span>
  <span class="tl-i"><svg class="i20"><use href="#t-c6"/></svg></span>
  <span class="tl-i"><svg class="i20"><use href="#t-c7"/></svg></span>
  <span class="tl-sep tl-gap5"></span>
  <span class="tl-i tl-gap5"><svg class="i20"><use href="#t-pct"/></svg></span>
  <span class="tl-i"><svg class="i20"><use href="#t-brk"/></svg></span>
  <span class="tl-show">显示和隐藏(<u>H</u>)</span><span class="tl-a"><span class="tri"></span></span>
  <span class="tl-i tl-gap5"><svg class="i20"><use href="#t-cyl"/></svg></span><span class="tl-a"><span class="tri"></span></span>
  <span class="tl-i"><svg class="i20"><use href="#t-cyl"/></svg></span>
  <span class="tl-i"><svg class="i20"><use href="#t-box"/></svg></span>
  <span class="tl-i"><svg class="i20"><use href="#t-shade"/></svg></span><span class="tl-a"><span class="tri"></span></span>
  <span class="tl-sep"></span>
  <span class="tri ms-auto me-2"></span>
</section>

<main class="nx-main">
  <nav class="nx-strip">
    <span class="st st-first"><svg class="i16"><use href="#l-gear"/></svg></span>
    <span class="st st-g21"><svg class="i28"><use href="#l-a"/></svg></span>
    <span class="st st-g15"><svg class="i28"><use href="#l-b"/></svg></span>
    <span class="st st-g14"><svg class="i28"><use href="#l-c"/></svg></span>
    <span class="st st-g15"><svg class="i28"><use href="#l-d"/></svg></span>
    <span class="st st-on"><svg class="i28"><use href="#l-e"/></svg></span>
    <span class="st st-g21"><svg class="i28"><use href="#l-f"/></svg></span>
    <span class="st st-g26"><svg class="i26"><use href="#l-g"/></svg></span>
    <span class="st st-g25"><svg class="i26"><use href="#l-h"/></svg></span>
    <span class="st st-g15"><svg class="i28"><use href="#l-i"/></svg></span>
    <span class="st st-g12"><svg class="i28"><use href="#l-j"/></svg></span>
    <span class="st st-g14"><svg class="i26"><use href="#l-k"/></svg></span>
  </nav>

  <aside class="nx-panel">
    <div class="pn-title d-flex align-items-center"><span>MBD 查询</span><span class="pn-max"></span></div>
    <div class="pn-sec d-flex align-items-center"><span class="tri-bd"></span><span>查询</span></div>
    <div class="pn-in pn-sel d-flex align-items-center justify-content-between"><span>基于文本的查询</span><span class="tri"></span></div>
    <div class="pn-in pn-row2 d-flex"><span class="pn-inp"></span><span class="pn-sq"></span><span class="pn-sq"></span></div>
    <div class="pn-in pn-filter d-flex align-items-center"><span class="tri-br"></span><span>过滤</span></div>
    <div class="pn-in pn-tbl">
      <div class="pn-scroll">
        <table class="table mbd-tbl" id="mbdTable">
          <colgroup><col class="mc-a"><col class="mc-b"><col class="mc-c"></colgroup>
          <thead><tr><th>名称</th><th>在视图中显示</th><th>警报</th></tr></thead>
          <tbody></tbody>
        </table>
      </div>
      <div class="pn-bar"><span class="pn-arr">‹</span><span class="pn-thumb"></span><span class="pn-arr pn-arr-r">›</span></div>
    </div>
    <div class="pn-div"></div>
    <div class="pn-col pn-col-a d-flex"><span class="tri-br"></span><span>消耗</span></div>
    <div class="pn-col pn-col-b d-flex"><span class="tri-br"></span><span>详细信息</span></div>
    <div class="pn-end"></div>
  </aside>

  <div class="nx-center">
    <div class="vt-tabs d-flex">
      <div class="vt-a d-flex align-items-center">
        <svg class="i20"><path d="M2 3H18V18H2z" fill="none" stroke="#777"/><path d="M5 15 9 6 14 10 11 15z" fill="none" stroke="#aaa"/></svg>
        <span>发现中心</span>
      </div>
      <div class="vt-b d-flex align-items-center">
        <svg class="i20"><use href="#l-c"/></svg>
        <span>_model1.prt</span>
        <svg class="i14"><path d="M3 3H8M3 3V12H11V7" fill="none" stroke="#fff" stroke-width="1.300"/><path d="M7 7 12 2M9 2H12V5" fill="none" stroke="#fff"/></svg>
        <span class="vt-x">✕</span>
      </div>
    </div>
    <div class="nx-view">
      <svg class="nx-triad" viewBox="0 0 200 150">
        <g fill="none" stroke="#bdbdbd" stroke-width="1"><path d="M27 83 59 73 86 86 53 96z"/><path d="M27 83V122L53 135V96M53 135 86 124V86"/></g>
        <path d="M54 85V54H51L56.500 36 62 54H59V85z" fill="#0a3fd0"/>
        <path d="M86 92 102 88 101 85 114 86.500 103 94 102 91 87 97z" fill="#2fa032"/>
        <path d="M68 108 90 117 91 114 102 125 88 124 89 121 70 113z" fill="#d63030"/>
        <g font-family="Liberation Sans" font-size="11"><text x="52.500" y="32" fill="#1448c8">Z</text><text x="116" y="89" fill="#2f8a32">Y</text><text x="104" y="132" fill="#c82828">X</text></g>
      </svg>

      <div class="card ui-dlg">
        <div class="card-header">
          <svg class="i14"><use href="#l-gear"/></svg>
          <span class="dlg-t">用户界面首选项</span>
          <span class="dlg-q">?</span>
          <span class="dlg-c">✕</span>
        </div>
        <div class="dlg-find d-flex align-items-center">
          <svg class="i24"><path d="M6 1H10V8H14V1H18V8L22 16V23H14V14H10V23H2V16L6 8z" fill="none" stroke="#555" stroke-width="1.100"/><path d="M2 17H10M14 17H22" stroke="#555"/></svg>
          <span>查找</span>
          <span class="dlg-find-i"></span>
        </div>
        <div class="dlg-body d-flex">
          <ul class="list-group ui-tree">
            <li class="list-group-item nd">布局</li>
            <li class="list-group-item nd nd-sel">主题</li>
            <li class="list-group-item nd">资源条</li>
            <li class="list-group-item nd">触控/语音</li>
            <li class="list-group-item nd">角色</li>
            <li class="list-group-item nd">选项</li>
            <li class="list-group-item nd nd-last"><span class="nd-plus">+</span>工具</li>
            <li class="list-group-item"></li><li class="list-group-item"></li><li class="list-group-item"></li>
            <li class="list-group-item"></li><li class="list-group-item"></li><li class="list-group-item"></li>
            <li class="list-group-item"></li><li class="list-group-item"></li><li class="list-group-item"></li>
            <li class="list-group-item"></li><li class="list-group-item"></li>
          </ul>
          <div class="dlg-pane">
            <div class="dlg-sec dlg-sec-a d-flex align-items-center"><span class="tri-bd"></span><span>NX 主题</span></div>
            <div class="dlg-type d-flex align-items-center"><span>类型</span>
              <div class="dlg-sel d-flex align-items-center justify-content-between"><span>浅色（推荐）</span><span class="tri"></span></div>
            </div>
            <div class="dlg-hr"></div>
            <div class="dlg-sec dlg-sec-b d-flex align-items-center"><span class="tri-bd"></span><span>透明度</span></div>
            <div class="dlg-chk d-flex align-items-center"><input class="form-check-input" type="checkbox" checked><span>将透明度用于未锁定的 UI 组件</span></div>
            <div class="dlg-hr"></div>
          </div>
        </div>
        <div class="dlg-foot d-flex justify-content-end">
          <button type="button" class="btn">确定</button>
          <button type="button" class="btn btn-danger">应用</button>
          <button type="button" class="btn">取消</button>
        </div>
      </div>
    </div>
  </div>

  <aside class="nx-right">
    <div class="rt-big"><svg class="i36"><use href="#b-line"/></svg></div>
    <div class="rt-big"><svg class="i36"><use href="#b-arc"/></svg></div>
    <div class="rt-r rt-mt3"><span class="rt-c"><svg class="i26"><use href="#p1"/></svg></span><span class="rt-c"><svg class="i26"><use href="#p2"/></svg></span></div>
    <div class="rt-r"><span class="rt-c"><svg class="i26"><use href="#p3"/></svg></span><span class="rt-c"><svg class="i26"><use href="#p4"/></svg></span></div>
    <div class="rt-r"><span class="rt-c"><svg class="i26"><use href="#p5"/></svg></span><span class="rt-c"><svg class="i26"><use href="#p6"/></svg></span></div>
    <div class="rt-r"><span class="rt-c"><svg class="i26"><use href="#p7"/></svg></span><span class="rt-c"><svg class="i26"><use href="#p8"/></svg></span></div>
    <div class="rt-r"><span class="rt-c rt-tb"><span class="rt-xyz">XYZ=</span><svg class="rt-wave" viewBox="0 0 26 8"><path d="M1 4C8 0 14 8 25 3" fill="none" stroke="#0a9fc8"/></svg></span><span class="rt-c"><svg class="i26"><use href="#p10"/></svg></span></div>
    <div class="rt-r"><span class="rt-c"><svg class="i26"><use href="#p11"/></svg></span><span class="rt-c"><svg class="i26"><use href="#p12"/></svg></span></div>
    <div class="rt-r"><span class="rt-c"><svg class="i26"><use href="#p13"/></svg></span><span class="rt-c"><svg class="i26"><use href="#p11"/></svg></span></div>
    <div class="rt-r"><span class="rt-c"><svg class="i26"><use href="#p14"/></svg></span><span class="rt-c"><svg class="i26"><use href="#p15"/></svg></span></div>
    <div class="rt-r"><span class="rt-c rt-a">A</span><span class="rt-c"><svg class="i26"><use href="#p16"/></svg></span></div>
    <div class="rt-sep rt-s1"></div>
    <div class="rt-big rt-s2"><svg class="i32"><use href="#w-prof"/></svg></div>
    <div class="rt-big rt-mb"><svg class="i32"><use href="#w-surf"/></svg></div>
    <div class="rt-r"><span class="rt-c"><svg class="i26"><use href="#x1"/></svg></span><span class="rt-c"><svg class="i26"><use href="#x2"/></svg></span></div>
    <div class="rt-r"><span class="rt-c"><svg class="i26"><use href="#x3"/></svg></span><span class="rt-c"><svg class="i26"><use href="#x4"/></svg></span></div>
    <div class="rt-r"><span class="rt-c"><svg class="i26"><use href="#x5"/></svg></span><span class="rt-c"><svg class="i26"><use href="#x6"/></svg></span></div>
    <div class="rt-r"><span class="rt-c"><svg class="i26"><use href="#x7"/></svg></span><span class="rt-c"><svg class="i26"><use href="#x8"/></svg></span></div>
    <div class="rt-r"><span class="rt-c"><svg class="i26"><use href="#x9"/></svg></span><span class="rt-c"><svg class="i26"><use href="#x10"/></svg></span></div>
    <div class="rt-r"><span class="rt-c"><svg class="i26"><use href="#x11"/></svg></span><span class="rt-c"><svg class="i26"><use href="#x12"/></svg></span></div>
    <div class="rt-r"><span class="rt-c"><svg class="i26"><use href="#x13"/></svg></span><span class="rt-c"><svg class="i26"><use href="#x14"/></svg></span></div>
    <div class="rt-r"><span class="rt-c"><svg class="i26"><use href="#x15"/></svg></span><span class="rt-c"><svg class="i26"><use href="#x16"/></svg></span></div>
    <div class="rt-r"><span class="rt-c"><svg class="i26"><use href="#x17"/></svg></span><span class="rt-c"><svg class="i26"><use href="#x18"/></svg></span></div>
    <div class="rt-sep rt-s2"></div>
    <span class="rt-left"></span>
  </aside>
</main>

<footer class="nx-status">
  <span class="ss-ic ss-first"><svg class="i20"><use href="#z-sk"/></svg></span>
  <span class="ss-ic"><svg class="i20"><use href="#z-rc"/></svg></span>
  <span class="ss-ic"><svg class="i20"><use href="#z-ln"/></svg></span>
  <span class="ss-ic"><svg class="i20"><use href="#z-ar"/></svg></span>
  <span class="ss-ic"><svg class="i20"><use href="#z-ci"/></svg></span>
  <span class="ss-t">在草图任务环境中打开</span>
  <span class="ss-sep"></span>
  <span class="ss-up">↑ 0.0 KB/s</span>
  <span class="tri ss-end"></span>
</footer>
<div class="nx-foot">
  <span class="ss-down">↓ 0.0 KB/s</span>
  <span class="ss-mark">UG爱好者论坛@b4585830</span>
</div>

<script>
  // empty rows of the query table
  const mbdBody = document.querySelector('#mbdTable tbody');
  for (let i = 0; i < 28; i++) {
    mbdBody.insertAdjacentHTML('beforeend', '<tr><td></td><td></td><td></td></tr>');
  }
</script>
<script src="https://cdn.jsdelivr.net/npm/bootstrap@5.3.3/dist/js/bootstrap.bundle.min.js"></script>
</body>
</html>
